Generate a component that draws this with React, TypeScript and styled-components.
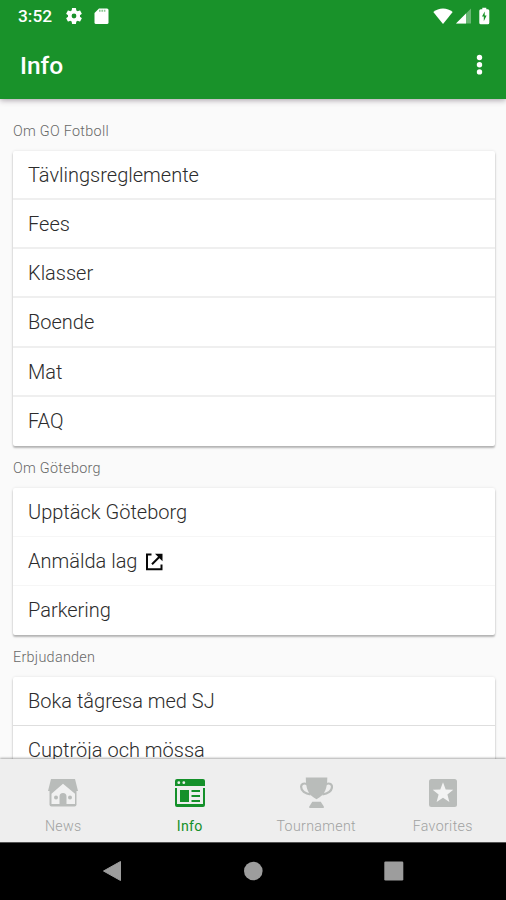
import React from "react";
import styled, { createGlobalStyle } from "styled-components";

const GlobalStyle = createGlobalStyle`
  *, *::before, *::after { box-sizing: border-box; }
  body { margin: 0; font-family: Roboto, "Liberation Sans", sans-serif; }
  svg { display: block; flex: none; }
`;

const Screen = styled.div`
  width: 506px;
  height: 900px;
  display: flex;
  flex-direction: column;
  overflow: hidden;
  background: #fafafa;
`;

const Header = styled.header`
  flex: none;
  height: 99px;
  background: #19922a;
  color: #fff;
  box-shadow: 0 1px 6px rgba(40, 20, 40, 0.42);
  z-index: 1;
`;

const StatusBar = styled.div`
  height: 32px;
  padding: 0 12px 0 18px;
  display: flex;
  align-items: center;
`;

const Clock = styled.span`
  width: 48px;
  font-size: 17.3px;
  font-weight: 500;
  line-height: 32px;
`;

const StatusGroup = styled.div<{ $end?: boolean }>`
  display: flex;
  align-items: center;
  gap: ${(p) => (p.$end ? "3px" : "12px")};
  margin-left: ${(p) => (p.$end ? "auto" : "0")};
`;

const TitleBar = styled.div`
  height: 67px;
  padding: 0 22px 2px 20px;
  display: flex;
  align-items: center;
  justify-content: space-between;
`;

const Title = styled.h1`
  margin: 0;
  padding-top: 2px;
  font-size: 24.5px;
  font-weight: 500;
  line-height: 65px;
`;

const Content = styled.main`
  flex: 1;
  min-height: 0;
  overflow: hidden;
  padding: 10px 11px 0 13px;
`;

const SectionLabel = styled.h2`
  margin: 0;
  height: 41.8px;
  font-size: 14.4px;
  font-weight: 300;
  line-height: 45px;
  letter-spacing: 0.28px;
  color: #686868;
`;

const Card = styled.ul`
  margin: 0;
  padding: 0;
  list-style: none;
  background: #fff;
  border-radius: 2px;
  box-shadow: 0 2px 2px rgba(0, 0, 0, 0.26), 0 0 3px rgba(0, 0, 0, 0.1);
`;

const Row = styled.li<{ $line: string; $thick: boolean }>`
  height: 49.2px;
  padding: ${(p) => (p.$thick ? 2 : 1)}px 15px 0;
  display: flex;
  align-items: center;
  gap: 8px;
  font-size: 20px;
  font-weight: 300;
  line-height: 47px;
  color: #2c2c2c;
  border-bottom: ${(p) => (p.$thick ? 2 : 1)}px solid ${(p) => p.$line};
  &:last-child { border-bottom-color: transparent; }
`;

const TabBar = styled.nav`
  flex: none;
  height: 83px;
  display: grid;
  grid-template-columns: repeat(4, 1fr);
  background: #eee;
  box-shadow: 0 -1px 2px rgba(0, 0, 0, 0.32);
  z-index: 1;
`;

const Tab = styled.div<{ $active: boolean }>`
  display: flex;
  flex-direction: column;
  align-items: center;
  padding-top: 17px;
  color: ${(p) => (p.$active ? "#14902a" : "#b9bcba")};
`;

const TabLabel = styled.span<{ $active: boolean }>`
  margin-top: 6px;
  font-size: 14.2px;
  font-weight: ${(p) => (p.$active ? 400 : 300)};
  line-height: 20px;
  letter-spacing: 0.35px;
  color: ${(p) => (p.$active ? "#14902a" : "#a0a2a1")};
`;

const SystemBar = styled.div`
  flex: none;
  height: 58px;
  padding: 0 102px 2px;
  display: flex;
  align-items: center;
  justify-content: space-between;
  background: #000;
  border-top: 1px solid #555;
`;

const GearIcon = () => (
  <svg width="16" height="16" viewBox="2 2 20 20" fill="#fff">
    <path d="M19.43 12.98c.04-.32.07-.64.07-.98s-.03-.66-.07-.98l2.11-1.65c.19-.15.24-.42.12-.64l-2-3.46c-.12-.22-.39-.3-.61-.22l-2.49 1c-.52-.4-1.08-.73-1.69-.98l-.38-2.65A.49.49 0 0 0 14 2h-4c-.25 0-.46.18-.49.42l-.38 2.65c-.61.25-1.17.59-1.69.98l-2.49-1c-.23-.09-.49 0-.61.22l-2 3.46c-.13.22-.07.49.12.64l2.11 1.65c-.04.32-.07.65-.07.98s.03.66.07.98l-2.11 1.65c-.19.15-.24.42-.12.64l2 3.46c.12.22.39.3.61.22l2.49-1c.52.4 1.08.73 1.69.98l.38 2.65c.03.24.24.42.49.42h4c.25 0 .46-.18.49-.42l.38-2.65c.61-.25 1.17-.59 1.69-.98l2.49 1c.23.09.49 0 .61-.22l2-3.46c.12-.22.07-.49-.12-.64zM12 15a3 3 0 1 1 0-6 3 3 0 0 1 0 6z" />
  </svg>
);

const SdCardIcon = () => (
  <svg width="15" height="17" viewBox="0 0 15 17">
    <path fill="#fff" d="M5 .5h8A1.500 1.500 0 0 1 14.500 2v12.500a1.500 1.500 0 0 1-1.500 1.500H2a1.500 1.500 0 0 1-1.500-1.500V5z" />
    <path stroke="#19922a" strokeOpacity=".5" strokeWidth="2" strokeDasharray="1.600 .8" d="M5 2.800h7.200" />
  </svg>
);

const WifiIcon = () => (
  <svg width="20" height="17" viewBox="0 0 20 17" fill="#fff">
    <path d="M10 16 .3 4C5.500-.7 14.500-.7 19.700 4z" />
  </svg>
);

const SignalIcon = () => (
  <svg width="16" height="16" viewBox="0 0 16 16" fill="#fff">
    <path fillOpacity=".35" d="M15 .5v15H0z" />
    <path d="M10 5.500v10H0z" />
  </svg>
);

const BatteryIcon = () => (
  <svg width="19" height="18" viewBox="0 0 19 18">
    <path fill="#fff" d="M7.300 2.300V.7h4v1.600h1.500a1.500 1.500 0 0 1 1.500 1.500v12a1.500 1.500 0 0 1-1.500 1.500h-7A1.500 1.500 0 0 1 4.300 15.800v-12a1.500 1.500 0 0 1 1.500-1.500z" />
    <path fill="#19922a" d="m9.700 4.500-2.700 5h1.800v4.800l2.800-5.800H9.700z" />
  </svg>
);

const MoreIcon = () => (
  <svg width="9" height="22" viewBox="0 0 9 22" fill="#fff">
    <circle cx="4.500" cy="3.500" r="2.700" />
    <circle cx="4.500" cy="10.700" r="2.700" />
    <circle cx="4.500" cy="17.900" r="2.700" />
  </svg>
);

const ExternalIcon = () => (
  <svg width="18" height="18" viewBox="0 0 18 18" fill="none" stroke="#080808" strokeWidth="2">
    <path d="M6.500 1.500H2v14.800h14.500V11.500M7 11.200l8-8" />
    <path fill="#080808" stroke="none" d="M10 .8h7.500v7.500z" />
  </svg>
);

const HouseIcon = () => (
  <svg width="34" height="34" viewBox="0 0 34 34" fill="currentColor">
    <path d="M5 3h24l3 12H2z" />
    <path d="M3.500 14h27v14.500a2 2 0 0 1-2 2h-23a2 2 0 0 1-2-2z" />
    <path fill="#f1f1f1" d="m17 7.800 12 10V28h-8.500v-7.500a3.500 3.500 0 0 0-7 0V28H5.500V17.800z" />
    <circle cx="10" cy="21.500" r="2" />
    <circle cx="24" cy="21.500" r="2" />
    <path d="M15 22a2 2 0 0 1 4 0v7h-4z" />
  </svg>
);

const BrowserIcon = () => (
  <svg width="34" height="34" viewBox="0 0 34 34" fill="currentColor">
    <path d="M4 3h26a2 2 0 0 1 2 2v5H2V5a2 2 0 0 1 2-2z" />
    <path d="M2 12h2v16h26V12h2v17a2 2 0 0 1-2 2H4a2 2 0 0 1-2-2z" />
    <path d="M7 14h9v12H7zM18.500 14H27v2h-8.500zM18.500 19H27v2h-8.500zM18.500 24H27v2h-8.500z" />
    <circle cx="5.800" cy="6.700" r="1.400" fill="#eee" />
    <circle cx="10.800" cy="6.700" r="1.400" fill="#eee" />
  </svg>
);

const TrophyIcon = () => (
  <svg width="34" height="34" viewBox="0 0 34 34" fill="currentColor">
    <path d="M6.800 1.500h21.500c0 11-2.500 16.500-8 20l-2.800 1.800-2.800-1.800c-5.500-3.500-7.900-9-7.900-20z" />
    <path fill="none" stroke="currentColor" strokeWidth="2.200" d="M8.300 8.300C4 6.300 2.100 8.500 2.100 10.800c0 4 4 7.200 9.400 7.500M26.800 8.300c4.200-2 6.200.2 6.200 2.500 0 4-4 7.200-9.500 7.500" />
    <path d="M13.300 25.800h8.500l3 4.700v1.500H10.300v-1.500z" />
  </svg>
);

const StarBoxIcon = () => (
  <svg width="34" height="34" viewBox="0 0 34 34">
    <rect x="3" y="3" width="28" height="28" rx="2.500" fill="currentColor" />
    <path fill="#f3f3f3" d="m17 6.300 2.700 7.100 7.600.4-5.900 4.800 2 7.400-6.400-4.200-6.400 4.200 2-7.400-5.900-4.800 7.600-.4z" />
  </svg>
);

const SystemButton = ({ shape }: { shape: "back" | "home" | "recent" }) => (
  <svg width="20" height="22" viewBox="0 0 20 22" fill="#9d9d9d">
    {shape === "back" && <path stroke="#9d9d9d" strokeLinejoin="round" d="M1.500 11 18.500 1.500v19z" />}
    {shape === "home" && <circle cx="10.300" cy="11" r="9.300" />}
    {shape === "recent" && <rect x=".3" y="1.500" width="19" height="19" rx="1.200" />}
  </svg>
);

const sections = [
  { title: "Om GO Fotboll", line: "#efefef", thick: true, rows: ["Tävlingsreglemente", "Fees", "Klasser", "Boende", "Mat", "FAQ"] },
  { title: "Om Göteborg", line: "#f6f6f6", thick: false, rows: ["Upptäck Göteborg", "Anmälda lag", "Parkering"] },
  { title: "Erbjudanden", line: "#dedede", thick: false, rows: ["Boka tågresa med SJ", "Cuptröja och mössa"] },
];

const tabs = [
  { label: "News", Icon: HouseIcon },
  { label: "Info", Icon: BrowserIcon },
  { label: "Tournament", Icon: TrophyIcon },
  { label: "Favorites", Icon: StarBoxIcon },
];

export default function App() {
  return (
    <Screen>
      <GlobalStyle />
      <Header>
        <StatusBar>
          <Clock>3:52</Clock>
          <StatusGroup>
            <GearIcon />
            <SdCardIcon />
          </StatusGroup>
          <StatusGroup $end>
            <WifiIcon />
            <SignalIcon />
            <BatteryIcon />
          </StatusGroup>
        </StatusBar>
        <TitleBar>
          <Title>Info</Title>
          <MoreIcon />
        </TitleBar>
      </Header>
      <Content>
        {sections.map((section) => (
          <section key={section.title}>
            <SectionLabel>{section.title}</SectionLabel>
            <Card>
              {section.rows.map((row) => (
                <Row key={row} $line={section.line} $thick={section.thick}>
                  {row}
                  {row === "Anmälda lag" && <ExternalIcon />}
                </Row>
              ))}
            </Card>
          </section>
        ))}
      </Content>
      <TabBar>
        {tabs.map(({ label, Icon }) => (
          <Tab key={label} $active={label === "Info"}>
            <Icon />
            <TabLabel $active={label === "Info"}>{label}</TabLabel>
          </Tab>
        ))}
      </TabBar>
      <SystemBar>
        <SystemButton shape="back" />
        <SystemButton shape="home" />
        <SystemButton shape="recent" />
      </SystemBar>
    </Screen>
  );
}
